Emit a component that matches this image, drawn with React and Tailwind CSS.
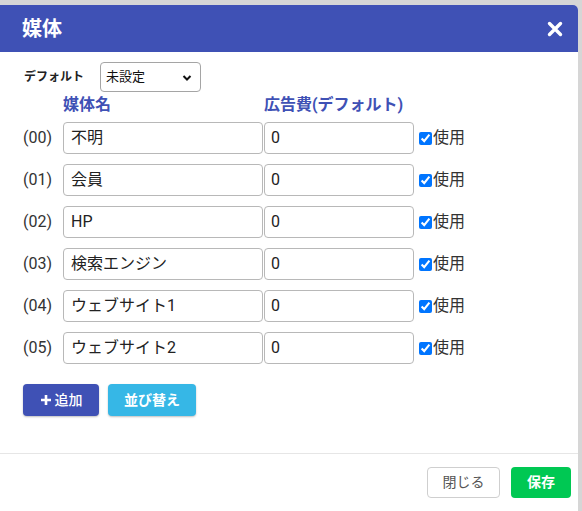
import React from 'react';

const rows = [
  { code: '00', name: '不明' },
  { code: '01', name: '会員' },
  { code: '02', name: 'HP' },
  { code: '03', name: '検索エンジン' },
  { code: '04', name: 'ウェブサイト1' },
  { code: '05', name: 'ウェブサイト2' },
];

const font = { fontFamily: 'Roboto, "Noto Sans CJK JP", sans-serif' };

export default function App() {
  return (
    <div className="h-[511px] w-[582px] overflow-hidden bg-[#d6d6d6] pt-[5px]" style={font}>
      <div className="flex h-[506px] w-[578px] flex-col rounded-tr-[5px] bg-white">
        {/* header */}
        <div className="flex h-[47px] items-center justify-between rounded-tr-[5px] bg-[#3f51b5] pl-[22px] pr-[15px]">
          <h1 className="text-[20px] font-bold text-white">媒体</h1>
          <svg width="16" height="16" viewBox="0 0 16 16">
            <path d="M2.5 2.5 L13.5 13.5 M13.5 2.5 L2.5 13.5" stroke="#fff" strokeWidth="3.4" strokeLinecap="round" />
          </svg>
        </div>

        {/* body */}
        <div className="pl-[23px]">
          <div className="mt-[10px] flex items-center">
            <span className="w-[77px] pl-px text-[12px] font-bold text-[#222]">デフォルト</span>
            <div className="relative flex h-[30px] w-[101px] items-center rounded-[4px] border border-[#a5a5a5] pl-[5px] text-[13px] text-[#111]">
              未設定
              <svg className="absolute right-[8px] top-[11px]" width="10" height="8" viewBox="0 0 10 8">
                <path d="M1.5 2 L5 5.5 L8.5 2" stroke="#111" strokeWidth="2" fill="none" />
              </svg>
            </div>
          </div>

          <div className="mt-[3px] flex h-5 items-center text-[16px] font-bold text-[#3f51b5]">
            <span className="ml-[40px] w-[201px]">媒体名</span>
            <span>広告費(デフォルト)</span>
          </div>

          <div className="mt-[7px] flex flex-col gap-[10px]">
            {rows.map((r) => (
              <div key={r.code} className="flex h-[32px] items-center">
                <span className="w-[40px] text-[16px] text-[#333]">({r.code})</span>
                <div className="flex h-[32px] w-[200px] items-center rounded-[4px] border border-[#b8b8b8] px-[7px] text-[16px] text-[#222]">
                  {r.name}
                </div>
                <div className="ml-px flex h-[32px] w-[150px] items-center rounded-[4px] border border-[#b8b8b8] px-[6px] text-[16px] text-[#222]">
                  0
                </div>
                <label className="ml-[5px] flex items-center text-[16px] text-[#333]">
                  <input type="checkbox" defaultChecked className="m-0 h-[13px] w-[13px] accent-[#0075ff]" />
                  <span className="ml-px">使用</span>
                </label>
              </div>
            ))}
          </div>

          <div className="mt-[20px] flex gap-[9px]">
            <button className="flex h-[32px] w-[76px] items-center justify-center gap-[3px] rounded-[4px] bg-[#3f51b5] text-[14px] font-medium text-white shadow-[0_1px_2px_rgba(0,0,0,0.25)]">
              <svg width="12" height="12" viewBox="0 0 12 12">
                <path d="M6 1 V11 M1 6 H11" stroke="#fff" strokeWidth="2.6" />
              </svg>
              追加
            </button>
            <button className="h-[32px] w-[88px] rounded-[4px] bg-[#36b7e6] text-[14px] font-bold text-white shadow-[0_1px_2px_rgba(0,0,0,0.25)]">
              並び替え
            </button>
          </div>
        </div>

        {/* footer */}
        <div className="mt-auto mb-[13px] flex justify-end gap-[11px] border-t border-[#e6e6e6] pt-[13px] pr-[7px]">
          <button className="h-[31px] w-[73px] rounded-[4px] border border-[#cfcfcf] bg-white text-[14px] text-[#555]">
            閉じる
          </button>
          <button className="h-[31px] w-[60px] rounded-[4px] bg-[#00c853] text-[14px] font-bold text-white">
            保存
          </button>
        </div>
      </div>
    </div>
  );
}
